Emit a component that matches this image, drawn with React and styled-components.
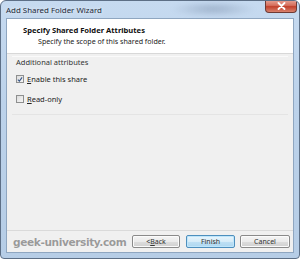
import React from 'react'
import styled, { createGlobalStyle } from 'styled-components'

const GlobalStyle = createGlobalStyle`
  html, body {
    margin: 0;
    padding: 0;
    background: #ffffff;
  }
  body {
    font-family: "Noto Sans", "Open Sans", sans-serif;
  }
`

const Window = styled.div`
  width: 300px;
  height: 259px;
  box-sizing: border-box;
  border: 1px solid #5d6f86;
  border-radius: 6px 6px 4px 4px;
  background: linear-gradient(180deg, #c6daf0 0%, #bcd2ea 40%, #b6cde6 100%);
  display: flex;
  flex-direction: column;
  padding: 0 5px 5px 5px;
  overflow: hidden;
  position: relative;
`

const Haze = styled.div`
  position: absolute;
  left: 170px;
  top: 0;
  width: 85px;
  height: 16px;
  background: radial-gradient(ellipse at center, rgba(90, 110, 140, 0.35) 0%, rgba(90, 110, 140, 0) 70%);
  filter: blur(2px);
`

const TitleBar = styled.div`
  height: 17px;
  display: flex;
  align-items: flex-start;
  justify-content: space-between;
  position: relative;
`

const Title = styled.span`
  font-size: 7.9px;
  color: #1e2a3a;
  margin-top: 4px;
  text-shadow: 0 0 4px rgba(255, 255, 255, 0.9);
`

const CloseButton = styled.div`
  width: 32px;
  height: 13px;
  margin-right: -3px;
  margin-top: -1px;
  box-sizing: border-box;
  border: 1px solid #6e3a34;
  border-top: none;
  border-radius: 0 0 4px 4px;
  background: linear-gradient(180deg, #e8a597 0%, #d66f5d 45%, #c2412c 55%, #d8826e 100%);
  display: flex;
  align-items: center;
  justify-content: center;
`

const Client = styled.div`
  flex: 1;
  background: #f0f0f0;
  border: 1px solid #8fa6c0;
  display: flex;
  flex-direction: column;
`

const Header = styled.div`
  height: 35px;
  background: #ffffff;
  border-bottom: 1px solid #d8d8d8;
  display: flex;
  flex-direction: column;
  padding: 6px 0 0 16px;
  box-sizing: border-box;
  gap: 1px;
`

const HeaderTitle = styled.div`
  font-size: 7.6px;
  font-weight: bold;
  color: #111;
`

const HeaderSub = styled.div`
  font-size: 7.1px;
  color: #222;
  padding-left: 15px;
`

const Body = styled.div`
  flex: 1;
  padding: 2px 5px 0 5px;
`

const Group = styled.div`
  border-top: 1px solid #fafafa;
  border-bottom: 1px solid #e4e4e4;
  height: 57px;
  display: flex;
  flex-direction: column;
  padding: 0 0 0 4px;
`

const GroupLabel = styled.div`
  font-size: 7.5px;
  color: #333;
  margin-bottom: 2px;
`

const CheckRow = styled.label`
  display: flex;
  align-items: center;
  gap: 3px;
  font-size: 7.5px;
  color: #222;
  height: 20px;
`

const Box = styled.span`
  width: 8px;
  height: 8px;
  box-sizing: border-box;
  border: 1px solid #8e8f8f;
  background: linear-gradient(135deg, #dcdcdc 0%, #f6f6f6 100%);
  display: flex;
  align-items: center;
  justify-content: center;
`

const Footer = styled.div`
  height: 22px;
  border-top: 1px solid #dadada;
  display: flex;
  align-items: center;
  padding: 0 3px 0 6px;
  box-sizing: border-box;
`

const Watermark = styled.div`
  font-family: "DejaVu Sans", sans-serif;
  font-weight: bold;
  font-size: 10.6px;
  color: #9a9a9a;
  letter-spacing: -0.4px;
  white-space: nowrap;
  flex: 1;
  text-shadow: 0 0 1px #ffffff;
`

const Button = styled.div`
  width: ${p => p.w}px;
  height: 13px;
  box-sizing: border-box;
  margin-left: ${p => p.gap}px;
  border: 1px solid ${p => (p.primary ? '#4e8fbd' : '#8a8a8a')};
  border-radius: 2px;
  background: ${p =>
    p.primary
      ? 'linear-gradient(180deg, #e9f5fc 0%, #d6ecf8 50%, #bfe0f4 51%, #aed7f0 100%)'
      : 'linear-gradient(180deg, #f4f4f4 0%, #ebebeb 50%, #dddddd 51%, #d0d0d0 100%)'};
  box-shadow: inset 0 0 0 1px ${p => (p.primary ? '#bfe6fb' : '#fbfbfb')};
  display: flex;
  align-items: center;
  justify-content: center;
  font-size: 7px;
  color: #333;
`

const Underlined = styled.span`
  text-decoration: underline;
`

const Check = () => (
  <svg width="7" height="7" viewBox="0 0 7 7">
    <path d="M1 3.6 L2.8 5.4 L6 1" fill="none" stroke="#3b5a8c" strokeWidth="1.3" />
  </svg>
)

const CloseX = () => (
  <svg width="9" height="8" viewBox="0 0 9 8">
    <path d="M1.5 1 L7.5 7 M7.5 1 L1.5 7" stroke="#ffffff" strokeWidth="1.8" strokeLinecap="round" />
  </svg>
)

const App = () => {
  return (
    <>
      <GlobalStyle />
      <Window>
        <Haze />
        <TitleBar>
          <Title>Add Shared Folder Wizard</Title>
          <CloseButton><CloseX /></CloseButton>
        </TitleBar>
        <Client>
          <Header>
            <HeaderTitle>Specify Shared Folder Attributes</HeaderTitle>
            <HeaderSub>Specify the scope of this shared folder.</HeaderSub>
          </Header>
          <Body>
            <Group>
              <GroupLabel>Additional attributes</GroupLabel>
              <CheckRow>
                <Box><Check /></Box>
                <span><Underlined>E</Underlined>nable this share</span>
              </CheckRow>
              <CheckRow>
                <Box />
                <span><Underlined>R</Underlined>ead-only</span>
              </CheckRow>
            </Group>
          </Body>
          <Footer>
            <Watermark>geek-university.com</Watermark>
            <Button w={48} gap={0}>&lt; <Underlined>B</Underlined>ack</Button>
            <Button w={49} gap={6} primary>Finish</Button>
            <Button w={50} gap={5}>Cancel</Button>
          </Footer>
        </Client>
      </Window>
    </>
  )
}

export default App
